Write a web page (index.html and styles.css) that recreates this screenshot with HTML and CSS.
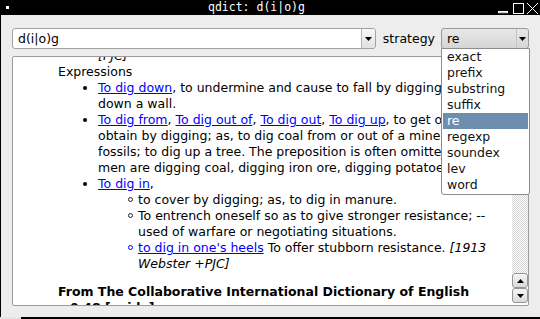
FILE: index.html
```html
<!DOCTYPE html>
<html>
<head>
<meta charset="utf-8">
<title>qdict</title>
<link rel="stylesheet" href="styles.css">
</head>
<body>
<div class="titlebar">
  <span class="win-icon"></span>
  <span class="title">qdict: d(i|o)g</span>
  <svg class="wm-buttons" width="45" height="15" viewBox="0 0 45 15">
    <rect x="3.5" y="11.5" width="9" height="1.2" fill="none" stroke="#fff" stroke-width="1"/>
    <rect x="18.5" y="3.5" width="10" height="10" fill="none" stroke="#fff" stroke-width="1"/>
    <path d="M32 3 L43 14 M43 3 L32 14" stroke="#fff" stroke-width="1"/>
  </svg>
</div>
<div class="window">
  <div class="toolbar">
    <div class="combo combo-edit">
      <span class="value">d(i|o)g</span>
      <span class="arrow"><svg width="7" height="4" viewBox="0 0 7 4"><path d="M0 0 H7 L3.5 4 Z" fill="#000"/></svg></span>
    </div>
    <span class="label">strategy</span>
    <div class="combo combo-strategy">
      <span class="value">re</span>
      <span class="arrow"><svg width="7" height="4" viewBox="0 0 7 4"><path d="M0 0 H7 L3.5 4 Z" fill="#000"/></svg></span>
    </div>
  </div>
  <div class="textarea">
    <div class="viewport">
      <div class="entry">
        <div class="prev"><i>[PJC]</i></div>
        <div>Expressions</div>
        <ul class="l1">
          <li><a href="#">To dig down</a>, to undermine and cause to fall by digging; as, to dig down a wall.</li>
          <li><a href="#">To dig from</a>, <a href="#">To dig out of</a>, <a href="#">To dig out</a>, <a href="#">To dig up</a>, to get out or obtain by digging; as, to dig coal from or out of a mine; to dig out fossils; to dig up a tree. The preposition is often omitted; as, the men are digging coal, digging iron ore, digging potatoes.</li>
          <li><a href="#">To dig in</a>,
            <ul class="l2">
              <li>to cover by digging; as, to dig in manure.</li>
              <li>To entrench oneself so as to give stronger resistance; -- used of warfare or negotiating situations.</li>
              <li class="blue"><a href="#">to dig in one's heels</a> To offer stubborn resistance. <i>[1913 Webster +PJC]</i></li>
            </ul>
          </li>
        </ul>
        <p class="src">From The Collaborative International Dictionary of English v.0.48 [gcide]:</p>
      </div>
    </div>
    <div class="scrollbar">
      <div class="track"></div>
      <div class="sb-btn"><svg width="7" height="4" viewBox="0 0 7 4"><path d="M0 4 H7 L3.5 0 Z" fill="#000"/></svg></div>
      <div class="sb-btn"><svg width="7" height="4" viewBox="0 0 7 4"><path d="M0 0 H7 L3.5 4 Z" fill="#000"/></svg></div>
    </div>
  </div>
</div>
<div class="bottom"><span class="bottom-left"></span></div>
<div class="popup">
  <div class="item">exact</div>
  <div class="item">prefix</div>
  <div class="item">substring</div>
  <div class="item">suffix</div>
  <div class="item sel">re</div>
  <div class="item">regexp</div>
  <div class="item">soundex</div>
  <div class="item">lev</div>
  <div class="item">word</div>
</div>
</body>
</html>
```
FILE: styles.css
```css
html, body {
  margin: 0;
  padding: 0;
}
body {
  width: 540px;
  height: 319px;
  overflow: hidden;
  position: relative;
  background: #000;
  font-family: "DejaVu Sans", "Noto Sans", sans-serif;
  font-size: 12.5px;
  color: #000;
}
.titlebar {
  height: 15px;
  display: flex;
  align-items: flex-start;
  color: #fff;
}
.win-icon {
  width: 3px;
  height: 3px;
  background: #fff;
  margin: 6px 0 0 6px;
}
.title {
  font-family: "DejaVu Sans Mono", monospace;
  font-size: 11.5px;
  line-height: 15px;
  margin-left: 199px;
  white-space: nowrap;
}
.wm-buttons {
  margin-left: auto;
  display: block;
}
.window {
  margin-left: 1px;
  height: 302px;
  box-sizing: border-box;
  background: #ededed;
  padding: 13px 11px 11px 11px;
  display: flex;
  flex-direction: column;
  gap: 7px;
}
.toolbar {
  height: 21px;
  display: flex;
  align-items: center;
}
.combo {
  height: 21px;
  box-sizing: border-box;
  border: 1px solid #a2a2a2;
  border-radius: 3px;
  display: flex;
}
.combo .value {
  flex: 1;
  line-height: 19px;
  padding-left: 5px;
  white-space: nowrap;
}
.combo .arrow {
  display: flex;
  align-items: center;
  justify-content: center;
  border-left: 1px solid #b4b4b4;
  border-radius: 0 2px 2px 0;
}
.combo-edit {
  flex: 1;
  background: #fff;
}
.combo-edit .arrow {
  width: 13px;
  background: linear-gradient(#f7f7f7, #e1e1e1);
}
.label {
  margin: 0 6px 0 7px;
  line-height: 21px;
}
.combo-strategy {
  width: 88px;
  background: linear-gradient(#e8e8e8, #d5d5d5);
  border-color: #999;
}
.combo-strategy .value {
  padding-left: 5px;
}
.combo-strategy .arrow {
  width: 11px;
  border-left-color: #c4c4c4;
}
.textarea {
  height: 250px;
  box-sizing: border-box;
  border: 1px solid #9b9b9b;
  border-radius: 2px;
  background: #fff;
  display: flex;
}
.viewport {
  flex: 1;
  overflow: hidden;
}
.entry {
  margin-top: -9px;
  padding: 0 0 0 45px;
  line-height: 16px;
}
.entry a {
  color: #0000ff;
  text-decoration: underline;
}
.entry .prev {
  padding-left: 40px;
}
.entry ul {
  margin: 0;
  padding-left: 40px;
}
.entry ul.l1 {
  list-style-type: disc;
}
.entry ul.l2 {
  list-style: none;
}
.entry ul.l2 > li {
  position: relative;
}
.entry ul.l2 > li::before {
  content: "";
  position: absolute;
  left: -10px;
  top: 5px;
  width: 5px;
  height: 5px;
  box-sizing: border-box;
  border: 1px solid #222;
  border-radius: 50%;
}
.entry ul.l2 > li.blue::before {
  border-color: #0000ff;
}
.entry .src {
  margin: 12px 0 0;
  font-weight: bold;
}
.scrollbar {
  width: 16px;
  display: flex;
  flex-direction: column;
  padding-bottom: 2px;
}
.track {
  flex: 1;
  background: repeating-conic-gradient(#d6d6d6 0 25%, #ffffff 0 50%) 0 0 / 2px 2px;
}
.sb-btn {
  height: 15px;
  box-sizing: border-box;
  border: 1px solid #969696;
  border-radius: 3px;
  background: linear-gradient(#f5f5f5, #dadada);
  display: flex;
  align-items: center;
  justify-content: center;
}
.bottom {
  height: 2px;
  display: flex;
}
.bottom-left {
  width: 21px;
  background: #e4e4e4;
}
.popup {
  position: absolute;
  left: 441px;
  top: 48px;
  width: 89px;
  box-sizing: border-box;
  border: 1px solid #8c8c8c;
  border-radius: 0 0 3px 3px;
  background: #fff;
  padding: 0 1px 1px;
}
.popup .item {
  height: 16px;
  line-height: 16px;
  padding-left: 4px;
  color: #111;
}
.popup .item.sel {
  background: #6d8db1;
  color: #fff;
}
```
